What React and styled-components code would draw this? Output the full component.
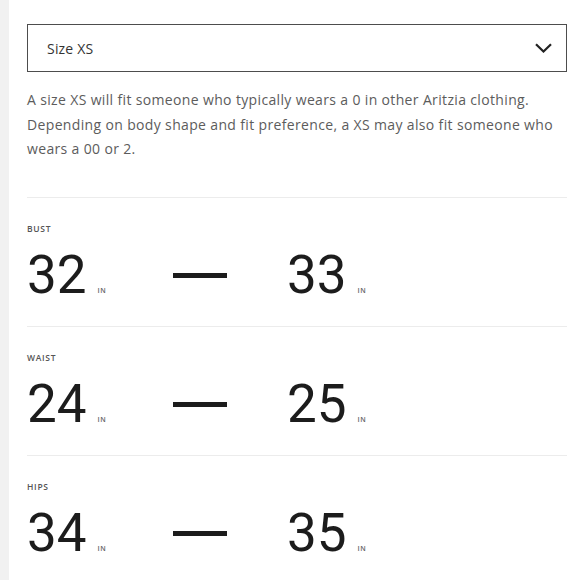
import styled, { createGlobalStyle } from "styled-components";

const GlobalStyle = createGlobalStyle`
  html, body {
    margin: 0;
    padding: 0;
    background: #ffffff;
  }
  body {
    font-family: "Open Sans", "Noto Sans", sans-serif;
  }
`;

const Page = styled.div`
  display: flex;
  width: 580px;
  height: 580px;
  overflow: hidden;
`;

const Strip = styled.div`
  width: 9px;
  flex-shrink: 0;
  background: #f1f1f1;
`;

const Panel = styled.div`
  flex: 1;
  padding: 24px 13px 0 18px;
`;

const Select = styled.div`
  height: 48px;
  box-sizing: border-box;
  border: 1.5px solid #4d4d4d;
  display: flex;
  align-items: center;
  justify-content: space-between;
  padding: 0 14px 0 19px;
  font-size: 14px;
  font-weight: 500;
  letter-spacing: 0.2px;
  color: #333;
`;

const Blurb = styled.p`
  margin: 16px 0 0;
  font-size: 14px;
  line-height: 24.5px;
  letter-spacing: 0.35px;
  color: #5c5c5c;
`;

const Section = styled.section`
  border-top: 1px solid #ececec;
  padding: 26px 0 24px;
  margin-top: ${(p) => p.$first ? "35px" : "0"};
`;

const Label = styled.div`
  font-size: 8.5px;
  font-weight: 600;
  line-height: 10px;
  letter-spacing: 0.7px;
  color: #555;
  text-transform: uppercase;
`;

const Range = styled.div`
  display: grid;
  grid-template-columns: 146px 114px auto;
  align-items: center;
  margin-top: 15px;
`;

const Value = styled.div`
  display: flex;
  align-items: baseline;
  gap: 11px;
`;

const Number = styled.span`
  font-family: "Roboto", "Liberation Sans", sans-serif;
  font-size: 53px;
  line-height: 53px;
  color: #1c1c1c;
`;

const Unit = styled.span`
  font-size: 7px;
  font-weight: 600;
  letter-spacing: 0.5px;
  color: #666;
`;

const Dash = styled.div`
  width: 54px;
  height: 5px;
  background: #1c1c1c;
`;

const measures = [
  { label: "Bust", from: 32, to: 33 },
  { label: "Waist", from: 24, to: 25 },
  { label: "Hips", from: 34, to: 35 },
];

function Chevron() {
  return (
    <svg width="17" height="10" viewBox="0 0 17 10">
      <polyline
        points="1,1.2 8.5,8.5 16,1.2"
        fill="none"
        stroke="#222"
        strokeWidth="2.2"
      />
    </svg>
  );
}

export default function App() {
  return (
    <>
      <GlobalStyle />
      <Page>
        <Strip />
        <Panel>
          <Select>
            <span>Size XS</span>
            <Chevron />
          </Select>
          <Blurb>
            A size XS will fit someone who typically wears a 0 in other Aritzia clothing.
            <br />
            Depending on body shape and fit preference, a XS may also fit someone who
            <br />
            wears a 00 or 2.
          </Blurb>
          {measures.map((m, i) => (
            <Section key={m.label} $first={i === 0}>
              <Label>{m.label}</Label>
              <Range>
                <Value>
                  <Number>{m.from}</Number>
                  <Unit>IN</Unit>
                </Value>
                <Dash />
                <Value>
                  <Number>{m.to}</Number>
                  <Unit>IN</Unit>
                </Value>
              </Range>
            </Section>
          ))}
        </Panel>
      </Page>
    </>
  );
}
